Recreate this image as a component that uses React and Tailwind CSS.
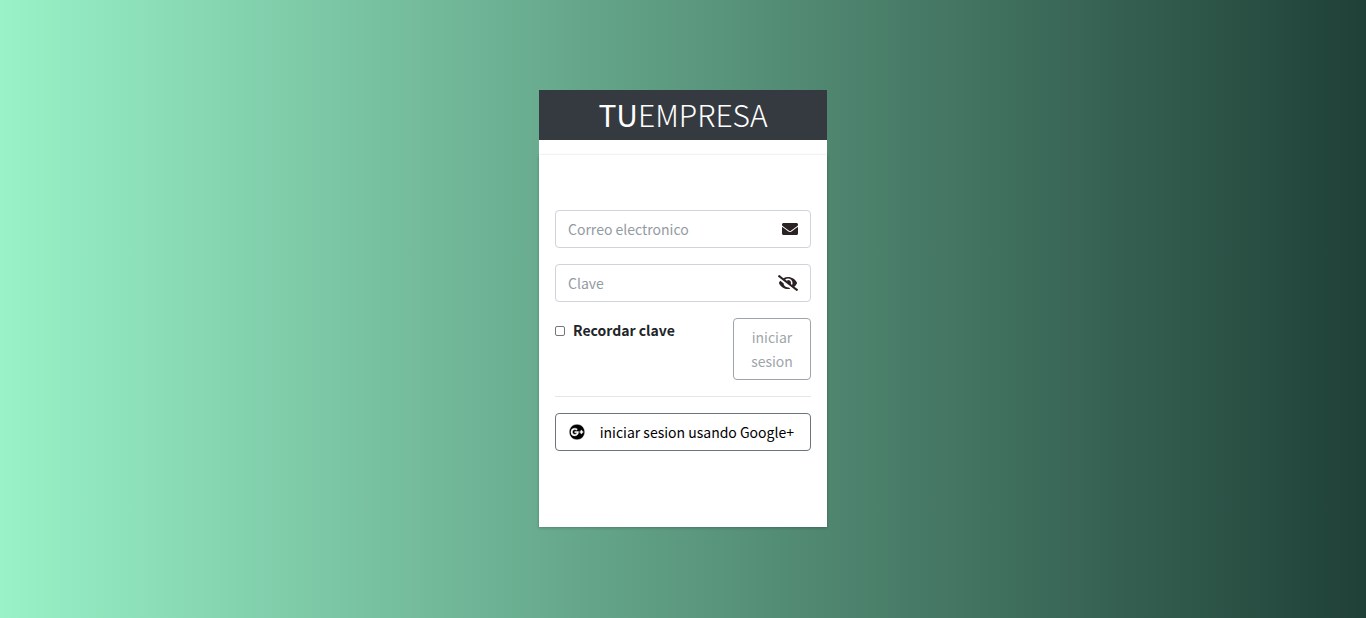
import { useState } from "react";
import { FaEnvelope, FaEyeSlash, FaEye, FaGooglePlus } from "react-icons/fa";

const field =
  "flex h-[38px] items-center rounded border border-[#ced4da] bg-white pr-3 focus-within:border-[#80bdff]";
const input =
  "h-full min-w-0 flex-1 bg-transparent pl-3 text-[14px] text-[#495057] outline-none placeholder:text-[#939ba2]";

export default function App() {
  const [visible, setVisible] = useState(false);

  return (
    <main className="flex min-h-screen flex-col items-center justify-center bg-linear-to-r/srgb from-[#99f2c8] to-[#1f4037] pb-px font-['Source_Sans_Pro','Noto_Sans_CJK_SC',sans-serif] text-[14px] leading-6 text-[#212529]">
      <div className="w-72 max-w-full bg-white">
        <h1 className="h-[50px] bg-[#343a40] text-center text-[30px] leading-[48px] font-light text-white">
          <b className="font-normal">TU</b>EMPRESA
        </h1>
        <section className="mt-[15px] bg-white px-4 pt-[55px] pb-[76px] shadow-[0_0_1px_rgba(0,0,0,0.125),0_1px_3px_rgba(0,0,0,0.2)]">
          <form onSubmit={(e) => e.preventDefault()}>
            <div className={field}>
              <input className={input} type="email" placeholder="Correo electronico" aria-label="Correo electronico" />
              <FaEnvelope className="size-4 text-[#2b2224]" aria-hidden="true" />
            </div>
            <div className={`${field} mt-4`}>
              <input className={input} type={visible ? "text" : "password"} placeholder="Clave" aria-label="Clave" />
              <button type="button" aria-label="Mostrar clave" onClick={() => setVisible(!visible)}>
                {visible ? (
                  <FaEye className="h-4 w-5 text-[#2b2224]" />
                ) : (
                  <FaEyeSlash className="h-4 w-5 text-[#2b2224]" />
                )}
              </button>
            </div>
            <div className="mt-4 flex items-start justify-between">
              <label className="flex items-center gap-2 font-bold">
                <input
                  type="checkbox"
                  className="mt-0.5 size-[10px] appearance-none rounded-[2px] border border-[#767676] bg-white checked:bg-[#0075ff]"
                />
                Recordar clave
              </label>
              <button
                type="submit"
                disabled
                className="h-[62px] w-[78px] rounded border border-[#6c757d] px-3 text-[#6c757d] opacity-65"
              >
                iniciar sesion
              </button>
            </div>
          </form>
          <hr className="my-4 border-black/10" />
          <button
            type="button"
            className="flex h-[38px] w-full items-center justify-between rounded border border-[#6c757d] pr-4 pl-[13px] text-black"
          >
            <FaGooglePlus className="size-4 stroke-white stroke-[14px]" aria-hidden="true" />
            <span>iniciar sesion usando Google+</span>
          </button>
        </section>
      </div>
    </main>
  );
}
